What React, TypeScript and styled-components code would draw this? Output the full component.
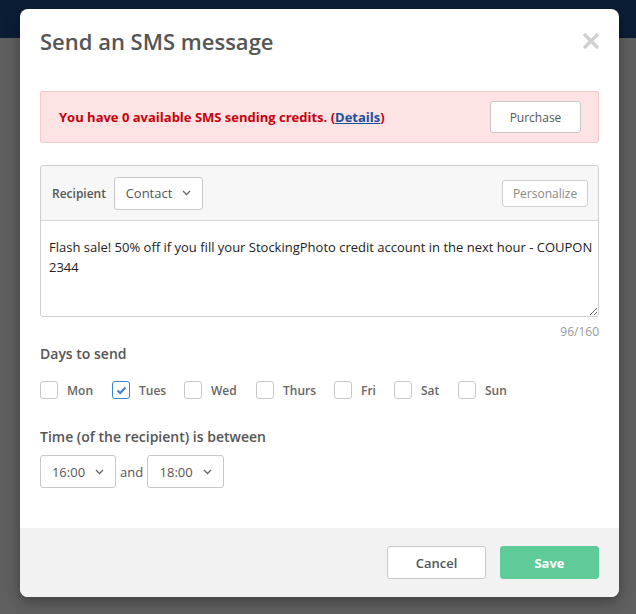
import { styled, createGlobalStyle } from "styled-components";

const GlobalStyle = createGlobalStyle`
  html, body {
    margin: 0;
    padding: 0;
    background: #5f5f5f;
    font-family: "Open Sans", "Liberation Sans", sans-serif;
  }
`;

const Page = styled.div`
  position: relative;
  width: 636px;
  height: 614px;
  overflow: hidden;
  background: #5f5f5f;
`;

const TopBar = styled.div`
  height: 38px;
  background: #0b1d35;
`;

const Modal = styled.div`
  position: absolute;
  left: 20px;
  top: 9px;
  width: 599px;
  height: 588px;
  background: #fff;
  border-radius: 8px;
  box-shadow: 0 4px 14px rgba(0, 0, 0, 0.35);
  display: flex;
  flex-direction: column;
  overflow: hidden;
`;

const Header = styled.div`
  display: flex;
  justify-content: space-between;
  align-items: center;
  padding: 17px 19px 0 20px;
`;

const Title = styled.h2`
  margin: 0;
  font-size: 22px;
  line-height: 30px;
  font-weight: 600;
  color: #555;
`;

const Close = styled.button`
  border: none;
  background: none;
  padding: 0;
  width: 18px;
  height: 18px;
  cursor: pointer;
  display: flex;
`;

const Body = styled.div`
  flex: 1;
  padding: 35px 20px 0 20px;
`;

const Alert = styled.div`
  box-sizing: border-box;
  height: 52px;
  display: flex;
  align-items: center;
  justify-content: space-between;
  padding: 0 17px 0 18px;
  background: #fde3e3;
  border: 1px solid #f6c9c9;
  border-radius: 2px;
`;

const AlertText = styled.span`
  font-size: 13px;
  font-weight: 700;
  color: #c8000a;
  a {
    color: #1a4f9c;
    text-decoration: underline;
  }
`;

const Button = styled.button<{ $primary?: boolean }>`
  box-sizing: border-box;
  font-family: inherit;
  font-size: ${(p) => (p.$primary ? "13px" : "12px")};
  font-weight: ${(p) => (p.$primary ? 700 : 400)};
  height: 32px;
  padding: 0 20px;
  border-radius: 3px;
  border: 1px solid ${(p) => (p.$primary ? "#5ecb98" : "#c8c8c8")};
  background: ${(p) => (p.$primary ? "#5ecb98" : "#fff")};
  color: ${(p) => (p.$primary ? "#fff" : "#555")};
  cursor: pointer;
`;

const PurchaseButton = styled(Button)`
  width: 91px;
  padding: 0;
  color: #555;
`;

const Composer = styled.div`
  margin-top: 22px;
  border: 1px solid #cfcfcf;
  border-radius: 3px;
  overflow: hidden;
`;

const ComposerBar = styled.div`
  height: 55px;
  box-sizing: border-box;
  display: flex;
  align-items: center;
  padding: 0 10px 0 11px;
  background: #f7f7f7;
  border-bottom: 1px solid #d6d6d6;
`;

const BarLabel = styled.span`
  font-size: 12px;
  font-weight: 600;
  color: #555;
  margin-right: 8px;
`;

const Select = styled.div<{ $width: number }>`
  box-sizing: border-box;
  width: ${(p) => p.$width}px;
  height: 33px;
  display: flex;
  align-items: center;
  justify-content: center;
  gap: 10px;
  background: #fff;
  border: 1px solid #c8c8c8;
  border-radius: 3px;
  font-size: 13px;
  color: #555;
`;

const Personalize = styled.button`
  margin-left: auto;
  box-sizing: border-box;
  width: 86px;
  height: 27px;
  border: 1px solid #cfcfcf;
  border-radius: 3px;
  background: #fff;
  font-family: inherit;
  font-size: 12px;
  color: #888;
  padding: 0;
`;

const Message = styled.textarea`
  display: block;
  box-sizing: border-box;
  width: 100%;
  height: 95px;
  border: none;
  outline: none;
  resize: vertical;
  padding: 16px 0 0 8px;
  font-family: inherit;
  font-size: 13px;
  line-height: 20px;
  color: #222;
`;

const Counter = styled.div`
  text-align: right;
  font-size: 12px;
  color: #999;
  margin-top: 6px;
  line-height: 18px;
`;

const SectionLabel = styled.div<{ $top: number }>`
  margin-top: ${(p) => p.$top}px;
  font-size: 14px;
  font-weight: 600;
  color: #555;
  line-height: 20px;
`;

const Days = styled.div`
  display: flex;
  align-items: center;
  margin-top: 17px;
`;

const Day = styled.label<{ $width: number }>`
  width: ${(p) => p.$width}px;
  display: flex;
  align-items: center;
  gap: 9px;
  font-size: 12px;
  font-weight: 600;
  color: #666;
`;

const Box = styled.span<{ $checked?: boolean }>`
  box-sizing: border-box;
  width: 18px;
  height: 18px;
  border-radius: 3px;
  border: 1px solid ${(p) => (p.$checked ? "#3b7fd9" : "#c8c8c8")};
  background: #fff;
  display: flex;
  align-items: center;
  justify-content: center;
`;

const TimeRow = styled.div`
  display: flex;
  align-items: center;
  gap: 4px;
  margin-top: 8px;
  font-size: 13px;
  color: #555;
`;

const Footer = styled.div`
  height: 69px;
  box-sizing: border-box;
  background: #f2f2f2;
  display: flex;
  align-items: center;
  justify-content: flex-end;
  gap: 14px;
  padding: 0 20px 0 0;
`;

const FooterButton = styled(Button)`
  width: 99px;
  height: 33px;
  padding: 0;
  font-size: 13px;
  font-weight: 600;
  ${(p) => (p.$primary ? "font-weight: 700;" : "")}
`;

const Chevron = () => (
  <svg width="9" height="6" viewBox="0 0 9 6">
    <polyline points="1,1 4.5,4.5 8,1" fill="none" stroke="#666" strokeWidth="1.3" />
  </svg>
);

const days = [
  { name: "Mon", width: 72 },
  { name: "Tues", width: 72, checked: true },
  { name: "Wed", width: 72 },
  { name: "Thurs", width: 78 },
  { name: "Fri", width: 60 },
  { name: "Sat", width: 64 },
  { name: "Sun", width: 60 },
];

export default function App() {
  return (
    <Page>
      <GlobalStyle />
      <TopBar />
      <Modal>
        <Header>
          <Title>Send an SMS message</Title>
          <Close aria-label="Close">
            <svg width="18" height="18" viewBox="0 0 18 18">
              <path d="M2 2 L16 16 M16 2 L2 16" stroke="#cfcfcf" strokeWidth="3.2" />
            </svg>
          </Close>
        </Header>
        <Body>
          <Alert>
            <AlertText>
              You have 0 available SMS sending credits. (<a href="#">Details</a>)
            </AlertText>
            <PurchaseButton>Purchase</PurchaseButton>
          </Alert>

          <Composer>
            <ComposerBar>
              <BarLabel>Recipient</BarLabel>
              <Select $width={89}>
                Contact <Chevron />
              </Select>
              <Personalize>Personalize</Personalize>
            </ComposerBar>
            <Message
              defaultValue="Flash sale! 50% off if you fill your StockingPhoto credit account in the next hour - COUPON 2344"
            />
          </Composer>
          <Counter>96/160</Counter>

          <SectionLabel $top={3}>Days to send</SectionLabel>
          <Days>
            {days.map((d) => (
              <Day key={d.name} $width={d.width}>
                <Box $checked={d.checked}>
                  {d.checked && (
                    <svg width="11" height="9" viewBox="0 0 11 9">
                      <polyline
                        points="1.5,4.5 4.2,7 9.5,1.5"
                        fill="none"
                        stroke="#3b7fd9"
                        strokeWidth="2"
                      />
                    </svg>
                  )}
                </Box>
                {d.name}
              </Day>
            ))}
          </Days>

          <SectionLabel $top={28}>Time (of the recipient) is between</SectionLabel>
          <TimeRow>
            <Select $width={76}>
              16:00 <Chevron />
            </Select>
            and
            <Select $width={77}>
              18:00 <Chevron />
            </Select>
          </TimeRow>
        </Body>
        <Footer>
          <FooterButton>Cancel</FooterButton>
          <FooterButton $primary>Save</FooterButton>
        </Footer>
      </Modal>
    </Page>
  );
}
